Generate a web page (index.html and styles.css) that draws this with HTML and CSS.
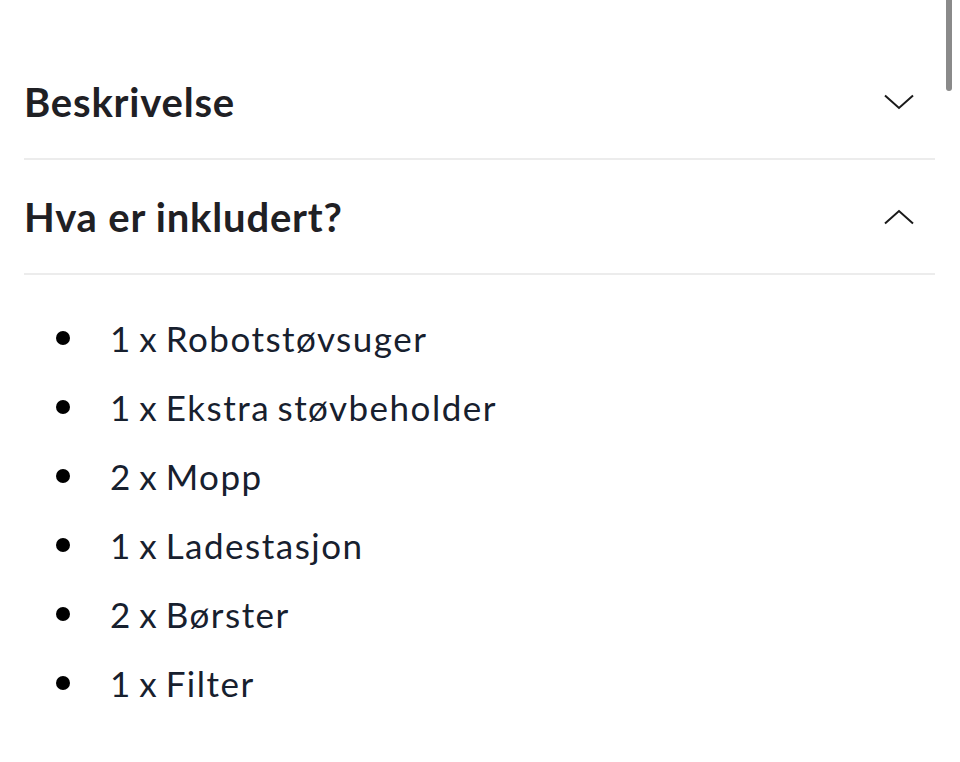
FILE: index.html
```html
<!DOCTYPE html>
<html lang="no">
<head>
  <meta charset="UTF-8">
  <meta name="viewport" content="width=device-width, initial-scale=1.0">
  <title>Produktinfo</title>
  <link rel="stylesheet" href="styles.css">
</head>
<body>
  <div class="scrollbar"></div>

  <div class="accordion">
    <div class="section">
      <div class="section-head">
        <h2>Beskrivelse</h2>
        <svg class="chevron" width="30" height="16" viewBox="0 0 30 16">
          <path d="M1 1.5 L15 14 L29 1.5" />
        </svg>
      </div>
    </div>

    <div class="section open">
      <div class="section-head">
        <h2>Hva er inkludert?</h2>
        <svg class="chevron" width="30" height="16" viewBox="0 0 30 16">
          <path d="M1 14.5 L15 2 L29 14.5" />
        </svg>
      </div>
    </div>

    <ul class="items">
      <li><span class="dot"></span>1 x Robotstøvsuger</li>
      <li><span class="dot"></span>1 x Ekstra støvbeholder</li>
      <li><span class="dot"></span>2 x Mopp</li>
      <li><span class="dot"></span>1 x Ladestasjon</li>
      <li><span class="dot"></span>2 x Børster</li>
      <li><span class="dot"></span>1 x Filter</li>
    </ul>
  </div>
</body>
</html>
```

FILE: styles.css
```css
:root {
  --text: #1f2024;
  --item: #17202e;
  --line: #ececec;
}
body {
  margin: 0;
  background: #fff;
  font-family: Lato, "Open Sans", sans-serif;
  color: var(--text);
}
.scrollbar {
  position: fixed;
  top: 0;
  right: 8px;
  width: 6px;
  height: 91px;
  background: #8a8a8a;
  border-radius: 0 0 3px 3px;
}
.accordion {
  padding: 45px 25px 0 24px;
}
.section {
  border-bottom: 2px solid var(--line);
}
.section-head {
  display: flex;
  justify-content: space-between;
  align-items: center;
  height: 113px;
  padding-right: 21px;
}
h2 {
  margin: 0;
  font-size: 40px;
  font-weight: 700;
  letter-spacing: 0.8px;
}
.chevron path {
  fill: none;
  stroke: #1a1a1a;
  stroke-width: 2;
}
.items {
  list-style: none;
  margin: 0;
  padding: 28px 0 0 32px;
}
.items li {
  display: flex;
  align-items: center;
  height: 69px;
  font-size: 35px;
  letter-spacing: 1.5px;
  word-spacing: -3px;
  color: var(--item);
}
.dot {
  width: 14px;
  height: 14px;
  border-radius: 50%;
  background: #000;
  margin-right: 40px;
}
```
